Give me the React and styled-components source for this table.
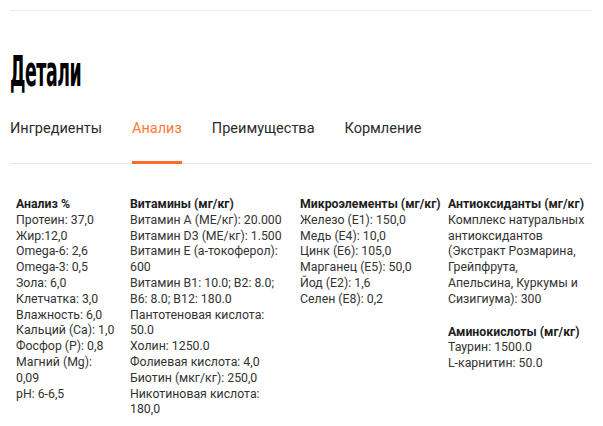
import React from 'react';
import styled, { createGlobalStyle } from 'styled-components';

const GlobalStyle = createGlobalStyle`
  body {
    margin: 0;
    background: #fff;
    font-family: "Roboto", "Liberation Sans", sans-serif;
    color: #333;
  }
`;

const Page = styled.div`
  padding: 10px 11px 0 10px;
`;

const TopRule = styled.div`
  height: 1px;
  background: #ececec;
`;

const Title = styled.h2`
  margin: 37px 0 0;
  height: 48px;
  font-family: "DejaVu Sans Condensed", "DejaVu Sans", sans-serif;
  font-weight: 900;
  font-size: 42px;
  line-height: 48px;
  color: #000;
  letter-spacing: -1px;
  transform: scaleX(0.46);
  transform-origin: left center;
  white-space: nowrap;
`;

const Tabs = styled.nav`
  display: flex;
  gap: 30px;
  margin-top: 22px;
  border-bottom: 1px solid #e6e6e6;
`;

const Tab = styled.div`
  position: relative;
  font-size: 14.5px;
  line-height: 18px;
  padding: 2px 0 25px;
  color: ${p => (p.$active ? '#ff7a3d' : '#2b2b2b')};

  &::after {
    content: '';
    display: ${p => (p.$active ? 'block' : 'none')};
    position: absolute;
    left: 0;
    right: 0;
    bottom: -1px;
    height: 3px;
    background: #ff6d2a;
  }
`;

const Grid = styled.div`
  display: grid;
  grid-template-columns: 101px 157px 135px 137px;
  column-gap: 13px;
  padding: 33px 0 0 6px;
  font-size: 12.3px;
  line-height: 15.8px;
`;

const Column = styled.div`
  display: flex;
  flex-direction: column;
  gap: 17px;
`;

const Block = styled.div``;

const Heading = styled.div`
  font-weight: 700;
  color: #1e1e1e;
  white-space: nowrap;
`;

const Line = styled.div``;

const columns = [
  [
    {
      title: 'Анализ %',
      lines: [
        'Протеин: 37,0',
        'Жир:12,0',
        'Omega-6: 2,6',
        'Omega-3: 0,5',
        'Зола: 6,0',
        'Клетчатка: 3,0',
        'Влажность: 6,0',
        'Кальций (Ca): 1,0',
        'Фосфор (P): 0,8',
        'Магний (Mg): 0,09',
        'pH: 6-6,5',
      ],
    },
  ],
  [
    {
      title: 'Витамины (мг/кг)',
      lines: [
        'Витамин А (МЕ/кг): 20.000',
        'Витамин D3 (МЕ/кг): 1.500',
        'Витамин Е (а-токоферол): 600',
        'Витамин B1: 10.0; B2: 8.0; B6: 8.0; B12: 180.0',
        'Пантотеновая кислота: 50.0',
        'Холин: 1250.0',
        'Фолиевая кислота: 4,0',
        'Биотин (мкг/кг): 250,0',
        'Никотиновая кислота: 180,0',
      ],
    },
  ],
  [
    {
      title: 'Микроэлементы (мг/кг)',
      lines: [
        'Железо (E1): 150,0',
        'Медь (E4): 10,0',
        'Цинк (E6): 105,0',
        'Марганец (E5): 50,0',
        'Йод (E2): 1,6',
        'Селен (E8): 0,2',
      ],
    },
  ],
  [
    {
      title: 'Антиоксиданты (мг/кг)',
      lines: [
        'Комплекс натуральных антиоксидантов (Экстракт Розмарина, Грейпфрута, Апельсина, Куркумы и Сизигиума): 300',
      ],
    },
    {
      title: 'Аминокислоты (мг/кг)',
      lines: ['Таурин: 1500.0', 'L-карнитин: 50.0'],
    },
  ],
];

const tabs = ['Ингредиенты', 'Анализ', 'Преимущества', 'Кормление'];

export default function App() {
  return (
    <Page>
      <GlobalStyle />
      <TopRule />
      <Title>Детали</Title>
      <Tabs>
        {tabs.map(t => (
          <Tab key={t} $active={t === 'Анализ'}>
            {t}
          </Tab>
        ))}
      </Tabs>
      <Grid>
        {columns.map((blocks, i) => (
          <Column key={i}>
            {blocks.map(b => (
              <Block key={b.title}>
                <Heading>{b.title}</Heading>
                {b.lines.map(l => (
                  <Line key={l}>{l}</Line>
                ))}
              </Block>
            ))}
          </Column>
        ))}
      </Grid>
    </Page>
  );
}
